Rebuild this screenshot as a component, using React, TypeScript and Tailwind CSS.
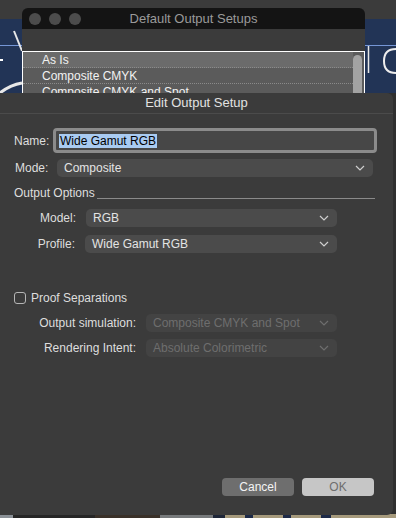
import { ReactNode } from "react";

const Chevron = ({ color = "#cfcfcf" }: { color?: string }) => (
  <svg width="10" height="6" viewBox="0 0 10 6" className="shrink-0">
    <path d="M1 1l4 4 4-4" fill="none" stroke={color} strokeWidth="1.2" />
  </svg>
);

const Select = ({
  value,
  width,
  disabled = false,
}: {
  value: string;
  width: string;
  disabled?: boolean;
}) => (
  <div
    className={`${width} h-[18px] rounded-[5px] flex items-center justify-between pl-[7px] pr-[8px] ${
      disabled ? "bg-[#434343] text-[#6e6e6e]" : "bg-[#4b4b4b] text-[#e4e4e4]"
    }`}
  >
    <span>{value}</span>
    <Chevron color={disabled ? "#6e6e6e" : "#cfcfcf"} />
  </div>
);

const Row = ({ label, labelW, children }: { label: string; labelW: string; children: ReactNode }) => (
  <div className="flex items-center">
    <span className={`${labelW} text-right pr-[10px] text-[#dedede]`}>{label}</span>
    {children}
  </div>
);

export default function App() {
  return (
    <div
      className="relative w-[396px] h-[518px] overflow-hidden bg-[#2f2f2f] text-[12px]"
      style={{ fontFamily: '"Liberation Sans", Arial, sans-serif' }}
    >
      {/* app chrome + backdrop picture */}
      <div className="absolute inset-x-0 top-0 h-[19px] bg-[#3b3b3b]" />
      <div className="absolute inset-x-0 top-[19px] h-[74px] bg-[#223456]">
        <svg width="396" height="74" viewBox="0 0 396 74">
          <line x1="0" y1="26.5" x2="396" y2="26.5" stroke="#7596d6" strokeWidth="1" />
          <path d="M14 12 L22 32" stroke="#e8e8e8" strokeWidth="2" />
          <rect x="0" y="40" width="3" height="2" fill="#fff" />
          <path d="M0 74 Q10 66 22 64" stroke="#e8e8e8" strokeWidth="3" fill="none" />
          <line x1="368.5" y1="27" x2="368.5" y2="54" stroke="#e8e8e8" strokeWidth="1.5" />
          <path d="M396 30 Q384 30 384 42 Q384 54 396 54" stroke="#eeeeee" strokeWidth="2" fill="none" />
        </svg>
      </div>

      {/* bottom strip of picture */}
      <div className="absolute inset-x-0 bottom-0 h-[4px] flex">
        <div className="w-[13px] bg-[#8a9096]" />
        <div className="w-[82px] bg-[#262626]" />
        <div className="w-[65px] bg-[#3a3129]" />
        <div className="w-[53px] bg-[#777a7c]" />
        <div className="w-[12px] bg-[#1e2638]" />
        <div className="w-[20px] bg-[#a69a7c]" />
        <div className="w-[8px] bg-[#1d2a48]" />
        <div className="w-[30px] bg-[#a69a7c]" />
        <div className="w-[8px] bg-[#1d2a48]" />
        <div className="w-[30px] bg-[#a69a7c]" />
        <div className="w-[10px] bg-[#1d2a48]" />
        <div className="flex-1 bg-[#a69a7c]" />
      </div>

      {/* back window: Default Output Setups */}
      <div className="absolute left-[22px] top-[8px] w-[343px] rounded-t-[6px] overflow-hidden bg-[#3b3b3b]">
        <div className="relative h-[21px] bg-[#141414] flex items-center">
          <div className="flex gap-[8px] pl-[7px]">
            <span className="w-[12px] h-[12px] rounded-full bg-[#4c4c4c]" />
            <span className="w-[12px] h-[12px] rounded-full bg-[#4c4c4c]" />
            <span className="w-[12px] h-[12px] rounded-full bg-[#4c4c4c]" />
          </div>
          <span className="absolute inset-0 flex items-center justify-center text-[13px] text-[#9a9a9a]">
            Default Output Setups
          </span>
        </div>
        <div className="h-[22px]" />
        <div className="flex border border-white border-b-0 bg-[#5b5b5b] h-[42px] overflow-hidden">
          <div className="flex-1 flex flex-col text-[#f2f2f2]">
            <div className="h-[16px] shrink-0 leading-[16px] pl-[19px] bg-[#6b6b6b] border-b border-dotted border-[#8a8a8a]">
              As Is
            </div>
            <div className="h-[16px] shrink-0 leading-[16px] pl-[19px] border-b border-dotted border-[#8a8a8a]">
              Composite CMYK
            </div>
            <div className="h-[9px] shrink-0 leading-[16px] pl-[19px] overflow-hidden">Composite CMYK and Spot</div>
          </div>
          <div className="w-[9px] mr-[2px] mt-[3px] h-[60px] rounded-full bg-[#a3a3a3]" />
        </div>
      </div>

      {/* front window: Edit Output Setup */}
      <div className="absolute left-0 top-[93px] w-[393px] h-[422px] rounded-r-[6px] bg-[#3b3b3b] flex flex-col">
        <div className="h-[21px] flex items-center justify-center text-[13px] text-[#e2e2e2] border-b border-[#4b4b4b]">
          Edit Output Setup
        </div>

        <div className="flex flex-col text-[#dedede]">
          <div className="flex items-center mt-[14px]">
            <span className="w-[53px] pl-[14px]">Name:</span>
            <div className="w-[324px] h-[25px] rounded-[4px] border-[3px] border-[#8b8b8b] bg-[#474747] flex items-center pl-[3px]">
              <span className="bg-[#a9cbf1] text-black px-[1px] leading-[14px]">Wide Gamut RGB</span>
            </div>
          </div>

          <div className="flex items-center mt-[6px]">
            <span className="w-[57px] pl-[15px]">Mode:</span>
            <Select value="Composite" width="w-[316px]" />
          </div>

          <div className="flex items-center mt-[8px] pl-[14px] h-[16px]">
            <span>Output Options</span>
            <div className="w-[278px] ml-auto mr-[18px] mt-[10px] h-px bg-[#8a8a8a]" />
          </div>

          <div className="flex flex-col gap-[8px] mt-[8px]">
            <Row label="Model:" labelW="w-[86px]">
              <Select value="RGB" width="w-[251px]" />
            </Row>
            <Row label="Profile:" labelW="w-[85px]">
              <Select value="Wide Gamut RGB" width="w-[252px]" />
            </Row>
          </div>

          <div className="flex items-center mt-[36px] pl-[14px] gap-[5px]">
            <span className="w-[12px] h-[12px] rounded-[3px] border border-[#b5b5b5]" />
            <span>Proof Separations</span>
          </div>

          <div className="flex flex-col gap-[7px] mt-[7px]">
            <Row label="Output simulation:" labelW="w-[146px]">
              <Select value="Composite CMYK and Spot" width="w-[191px]" disabled />
            </Row>
            <Row label="Rendering Intent:" labelW="w-[146px]">
              <Select value="Absolute Colorimetric" width="w-[191px]" disabled />
            </Row>
          </div>
        </div>

        <div className="mt-auto mb-[19px] flex justify-end gap-[8px] pr-[19px]">
          <div className="w-[72px] h-[18px] rounded-[4px] bg-[#6e6e6e] text-[#f4f4f4] flex items-center justify-center">
            Cancel
          </div>
          <div className="w-[72px] h-[18px] rounded-[4px] bg-[#c6c6c6] text-[#6e6e6e] flex items-center justify-center">
            OK
          </div>
        </div>
      </div>
    </div>
  );
}
